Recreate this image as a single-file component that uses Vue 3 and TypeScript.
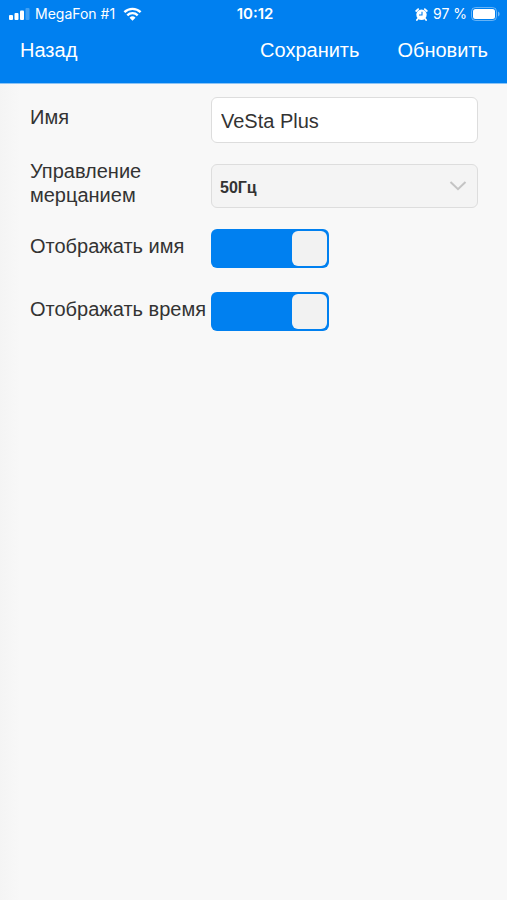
<script setup lang="ts">
import { ref } from 'vue'

const name = ref('VeSta Plus')
const flicker = ref('50')
const showName = ref(true)
const showTime = ref(true)
</script>

<template>
  <div class="screen">
    <header class="top">
      <div class="status">
        <div class="side">
          <svg class="signal" width="21" height="12" viewBox="0 0 21 12" aria-hidden="true">
            <rect x="0" y="7" width="4" height="5" rx="1" />
            <rect x="5.5" y="5" width="4" height="7" rx="1" />
            <rect x="11" y="2.5" width="4" height="9.5" rx="1" />
            <rect x="16.5" y="0" width="4" height="12" rx="1" opacity="0.25" />
          </svg>
          <span>MegaFon #1</span>
          <svg class="wifi" width="19" height="14" viewBox="0 0 19 14" aria-hidden="true">
            <path d="M1.4 5.2a11.6 11.6 0 0 1 16.2 0" />
            <path d="M4.3 8.3a7.4 7.4 0 0 1 10.4 0" />
            <path class="dot" d="M9.5 13.8 6.5 10.7a4.3 4.3 0 0 1 6 0z" />
          </svg>
        </div>
        <span class="clock">10:12</span>
        <div class="side right">
          <svg width="13" height="13" viewBox="0 0 13 13" aria-hidden="true">
            <circle cx="6.5" cy="6.8" r="5.2" fill="#fff" />
            <path d="M1.2 3 3.2 1.2M11.8 3 9.8 1.2M2.7 11l-.8 1M10.3 11l.8 1" stroke="#fff" stroke-width="1.8" stroke-linecap="round" />
            <path d="M7 3.8V7H4" fill="none" stroke="#0080f0" stroke-width="1.1" />
          </svg>
          <span>97 %</span>
          <svg class="battery" width="30" height="14" viewBox="0 0 30 14" aria-hidden="true">
            <rect x=".5" y=".5" width="25" height="13" rx="4" fill="none" stroke="#fff" stroke-opacity="0.4" />
            <rect x="2" y="2" width="22" height="10" rx="2.5" fill="#fff" />
            <path d="M27 4.5a2.7 2.7 0 0 1 0 5z" fill="#fff" fill-opacity="0.45" />
          </svg>
        </div>
      </div>
      <nav class="bar">
        <button type="button" class="back">Назад</button>
        <button type="button">Сохранить</button>
        <button type="button">Обновить</button>
      </nav>
    </header>

    <form class="form" @submit.prevent>
      <div class="row">
        <label for="name">Имя</label>
        <input id="name" v-model="name" class="field" type="text" />
      </div>
      <div class="row">
        <label for="flicker">Управление мерцанием</label>
        <div class="select">
          <select id="flicker" v-model="flicker">
            <option value="50">50Гц</option>
            <option value="60">60Гц</option>
          </select>
          <svg width="18" height="10" viewBox="0 0 18 10" aria-hidden="true">
            <path d="M1.5 1 9 8.2 16.5 1" />
          </svg>
        </div>
      </div>
      <div class="row toggle-row">
        <label for="show-name">Отображать имя</label>
        <input id="show-name" v-model="showName" class="toggle" type="checkbox" role="switch" />
      </div>
      <div class="row toggle-row">
        <label for="show-time">Отображать время</label>
        <input id="show-time" v-model="showTime" class="toggle" type="checkbox" role="switch" />
      </div>
    </form>
  </div>
</template>

<style>
body {
  margin: 0;
  background: #f8f8f8;
}
</style>

<style scoped>
.screen {
  min-height: 100vh;
  background: linear-gradient(to right, #f4f4f4, #f8f8f8 20px);
  color: #333;
  font-family: "Liberation Sans", Arial, sans-serif;
}

.top {
  background: #0080f0;
  color: #fff;
  border-bottom: 1px solid #8cc4f5;
}

.status {
  display: grid;
  grid-template-columns: 1fr auto 1fr;
  align-items: center;
  height: 28px;
  padding: 0 6px 0 9px;
  font: 14px/28px Inter, sans-serif;
}

.side {
  display: flex;
  align-items: center;
  gap: 5px;
}

.right {
  justify-content: flex-end;
}

.battery {
  margin-left: -1px;
}

.clock {
  font-size: 15px;
  font-weight: 600;
}

.signal {
  fill: #fff;
}

.wifi {
  margin-left: 3px;
  fill: none;
  stroke: #fff;
  stroke-width: 2.4;
}

.wifi .dot {
  fill: #fff;
  stroke: none;
}

.bar {
  display: flex;
  gap: 38px;
  height: 55px;
  padding: 0 19px 0 20px;
  align-items: flex-start;
}

.bar button {
  padding: 0;
  border: 0;
  background: none;
  color: inherit;
  font: 20px/44px "Liberation Sans", Arial, sans-serif;
}

.bar .back {
  margin-right: auto;
}

.form {
  display: grid;
  gap: 16px;
  padding: 13px 29px 24px 30px;
}

.row {
  display: grid;
  grid-template-columns: 181px 1fr;
  align-items: center;
}

.row label {
  padding-bottom: 6px;
  font-size: 20px;
  line-height: 24px;
}

.field,
.select select {
  box-sizing: border-box;
  width: 100%;
  border: 1px solid #ddd;
  border-radius: 6px;
  color: #333;
  font-family: inherit;
}

.field {
  height: 46px;
  padding: 2px 9px 0;
  background: #fff;
  font-size: 20px;
}

.select {
  display: grid;
  align-items: center;
}

.select select,
.select svg {
  grid-area: 1 / 1;
}

.select select {
  appearance: none;
  height: 44px;
  padding: 2px 32px 0 8px;
  background: #f4f4f4;
  font-size: 16px;
  font-weight: 700;
}

.select svg {
  justify-self: end;
  margin-right: 11px;
  fill: none;
  stroke: #c4c4c4;
  stroke-width: 2;
  pointer-events: none;
}

.toggle-row {
  padding-bottom: 8px;
}

.toggle {
  appearance: none;
  box-sizing: border-box;
  display: flex;
  width: 118px;
  height: 39px;
  margin: 0;
  padding: 2px;
  border-radius: 6px;
  background: #ccc;
}

.toggle::before {
  content: "";
  width: 35px;
  border-radius: 6px;
  background: #f2f2f2;
}

.toggle:checked {
  justify-content: flex-end;
  background: #0080f0;
}
</style>
